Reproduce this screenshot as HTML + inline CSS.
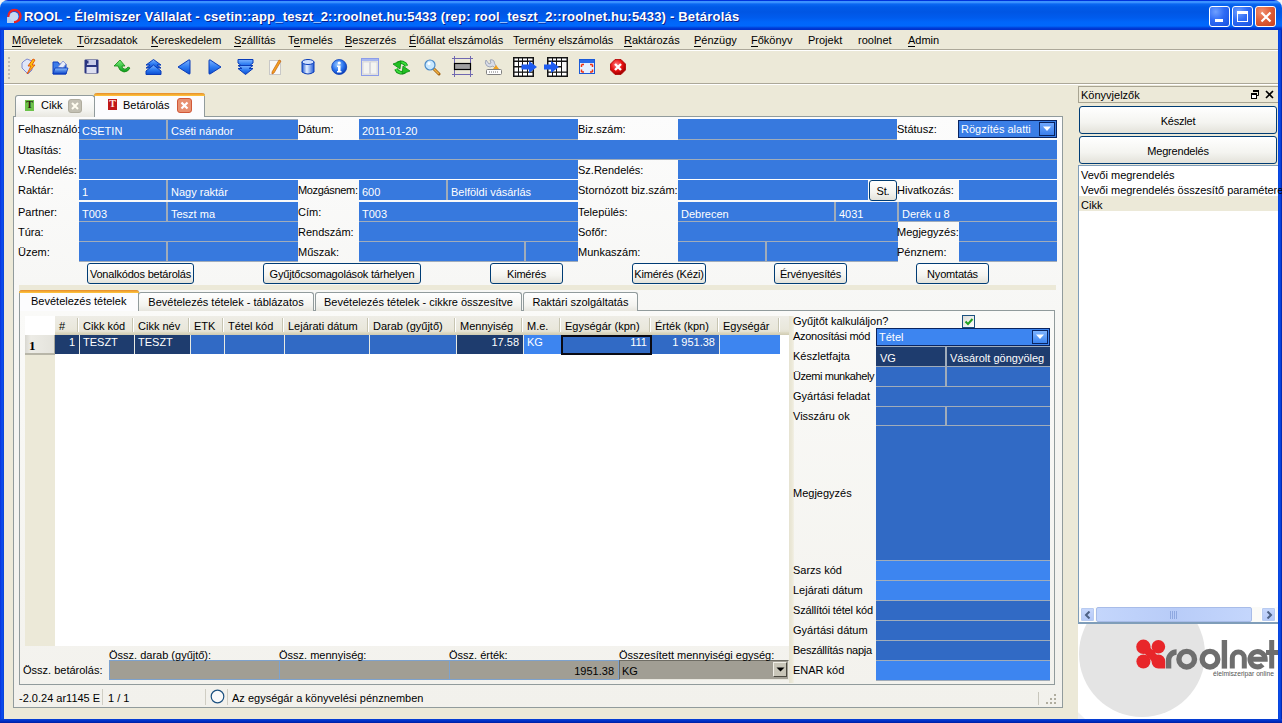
<!DOCTYPE html><html><head><meta charset="utf-8"><style>
html,body{margin:0;padding:0}
body{width:1282px;height:723px;overflow:hidden;position:relative;background:#F4F4F4;font-family:"Liberation Sans",sans-serif;font-size:11px;color:#000}
.a{position:absolute;box-sizing:border-box}
.t{white-space:nowrap;line-height:13px;letter-spacing:0}
.w{color:#fff}
.btn{padding-top:1px;border:1px solid #003C74;border-radius:3px;background:linear-gradient(#FFFFFF,#F4F4F0 60%,#E3E2DA);text-align:center;line-height:19px;letter-spacing:-0.2px;white-space:nowrap}
u{text-decoration:none;border-bottom:1px solid #000;}
</style></head><body>
<div class="a " style="left:0px;top:0px;width:1282px;height:30px;background:linear-gradient(#0034DC 0px,#0034DC 1px,#3D95FF 1px,#3A90FF 2.5px,#0A68F2 4px,#005AE8 7px,#0056E4 12px,#005CEE 18px,#0066FA 22px,#0068FC 26px,#0048E0 27.5px,#0032CC 29px,#0032CC 30px);border-radius:8px 8px 0 0"></div>
<div class="a " style="left:0px;top:30px;width:4px;height:693px;background:linear-gradient(90deg,#0831D9,#0A4EF0 50%,#0842D6)"></div>
<div class="a " style="left:1278px;top:30px;width:4px;height:693px;background:linear-gradient(90deg,#0842D6,#0A4EF0 50%,#001EA0)"></div>
<div class="a " style="left:0px;top:719px;width:1282px;height:4px;background:linear-gradient(#0842D6,#0030C8 50%,#001EA0)"></div>
<div class="a " style="left:4px;top:30px;width:1274px;height:689px;background:#ECE9D8"></div>
<svg class="a" style="left:6px;top:8px" width="16" height="16" viewBox="0 0 16 16">
<circle cx="8.5" cy="8" r="6" fill="none" stroke="#F02020" stroke-width="2.4"/>
<rect x="1" y="9" width="7" height="6" fill="#B8D0F0"/>
<circle cx="8" cy="8.5" r="4.5" fill="#C8D8F0"/>
</svg>
<div class="a" style="left:24px;top:9px;font-weight:bold;font-size:13px;line-height:16px;color:#fff;letter-spacing:0.2px;white-space:nowrap;text-shadow:1px 1px 0 #0A1E8C">ROOL - Élelmiszer Vállalat - csetin::app_teszt_2::roolnet.hu:5433 (rep: rool_teszt_2::roolnet.hu:5433) - Betárolás</div>
<div class="a " style="left:1209px;top:6px;width:21px;height:21px;border:1px solid #fff;border-radius:3px;background:radial-gradient(circle at 30% 25%,#6FA0FF 0%,#2F6BF5 45%,#1650E0 100%)"><div class="a" style="left:5px;top:12px;width:8px;height:3px;background:#fff"></div></div>
<div class="a " style="left:1232px;top:6px;width:21px;height:21px;border:1px solid #fff;border-radius:3px;background:radial-gradient(circle at 30% 25%,#6FA0FF 0%,#2F6BF5 45%,#1650E0 100%)"><div class="a" style="left:4px;top:4px;width:11px;height:11px;border:1px solid #fff;border-top-width:3px"></div></div>
<div class="a " style="left:1255px;top:6px;width:21px;height:21px;border:1px solid #fff;border-radius:3px;background:radial-gradient(circle at 30% 25%,#F09070 0%,#E0603A 45%,#C8401C 100%)"><svg class="a" style="left:0;top:0" width="21" height="21"><path d="M5.5 5.5 L14.5 14.5 M14.5 5.5 L5.5 14.5" stroke="#fff" stroke-width="2.2"/></svg></div>
<div class="a " style="left:4px;top:49px;width:1274px;height:1px;background:#ACA899"></div>
<div class="a " style="left:4px;top:50px;width:1274px;height:1px;background:#fff"></div>
<div class="a t " style="left:12px;top:34px;"><u>M</u>űveletek</div>
<div class="a t " style="left:77px;top:34px;"><u>T</u>örzsadatok</div>
<div class="a t " style="left:151px;top:34px;"><u>K</u>ereskedelem</div>
<div class="a t " style="left:234px;top:34px;"><u>S</u>zállítás</div>
<div class="a t " style="left:288px;top:34px;">T<u>e</u>rmelés</div>
<div class="a t " style="left:345px;top:34px;"><u>B</u>eszerzés</div>
<div class="a t " style="left:409px;top:34px;"><u>É</u>lőállat elszámolás</div>
<div class="a t " style="left:513px;top:34px;">Termény elszámolás</div>
<div class="a t " style="left:624px;top:34px;"><u>R</u>aktározás</div>
<div class="a t " style="left:694px;top:34px;"><u>P</u>énzügy</div>
<div class="a t " style="left:751px;top:34px;"><u>F</u>őkönyv</div>
<div class="a t " style="left:808px;top:34px;">Projekt</div>
<div class="a t " style="left:858px;top:34px;">roolnet</div>
<div class="a t " style="left:908px;top:34px;"><u>A</u>dmin</div>
<div class="a " style="left:4px;top:83px;width:1274px;height:1px;background:#ACA899"></div>
<div class="a " style="left:4px;top:84px;width:1274px;height:1px;background:#fff"></div>
<div class="a " style="left:8px;top:57px;width:2px;height:2px;background:#C1BEB3"></div>
<div class="a " style="left:8px;top:61px;width:2px;height:2px;background:#C1BEB3"></div>
<div class="a " style="left:8px;top:65px;width:2px;height:2px;background:#C1BEB3"></div>
<div class="a " style="left:8px;top:69px;width:2px;height:2px;background:#C1BEB3"></div>
<div class="a " style="left:8px;top:73px;width:2px;height:2px;background:#C1BEB3"></div>
<div class="a " style="left:8px;top:77px;width:2px;height:2px;background:#C1BEB3"></div>
<svg width="0" height="0" style="position:absolute"><defs>
<linearGradient id="gblue" x1="0" y1="0" x2="0" y2="1"><stop offset="0" stop-color="#7DB4FF"/><stop offset="0.5" stop-color="#2F7DF2"/><stop offset="1" stop-color="#0A4CD0"/></linearGradient>
<linearGradient id="ggreen" x1="0" y1="0" x2="0" y2="1"><stop offset="0" stop-color="#7CF07C"/><stop offset="1" stop-color="#0A9A1A"/></linearGradient>
<radialGradient id="rblue" cx="0.4" cy="0.35" r="0.65"><stop offset="0" stop-color="#9CCBFF"/><stop offset="0.6" stop-color="#2A74EE"/><stop offset="1" stop-color="#0B3FB8"/></radialGradient>
<radialGradient id="rred" cx="0.4" cy="0.35" r="0.65"><stop offset="0" stop-color="#FF8080"/><stop offset="0.6" stop-color="#E81010"/><stop offset="1" stop-color="#A00000"/></radialGradient>
<linearGradient id="gfold" x1="0" y1="0" x2="0" y2="1"><stop offset="0" stop-color="#8CC0FF"/><stop offset="1" stop-color="#0842C8"/></linearGradient>
<linearGradient id="gcyl" x1="0" y1="0" x2="1" y2="0"><stop offset="0" stop-color="#1A55D0"/><stop offset="0.4" stop-color="#E8F2FF"/><stop offset="1" stop-color="#1E5AD8"/></linearGradient>
</defs></svg>
<svg class="a" style="left:21px;top:58px" width="17" height="17" viewBox="0 0 17 17"><path d="M3 3 L6 1 L11 3 L11 12 L7 16 L1 10 L1 5 Z" fill="#E0E6F8" stroke="#7D88D0" stroke-width="1"/><path d="M12 1 L7 8 L10 8 L6 16 L14 7 L11 7 L14 2 Z" fill="#FFC20A" stroke="#E0500A" stroke-width="0.9"/></svg>
<svg class="a" style="left:52px;top:59px" width="17" height="16" viewBox="0 0 17 16"><path d="M1 3 L6 3 L7 5 L14 5 L14 15 L1 15 Z" fill="#3C7CE8" stroke="#1040C0" stroke-width="1"/><path d="M6 8 L11 2 L14 5 L11 9 Z" fill="#E6ECF8" stroke="#8090D0" stroke-width="0.8"/><path d="M3 9 L16 9 L14 15 L1 15 Z" fill="url(#gfold)" stroke="#0836B8" stroke-width="0.8"/></svg>
<svg class="a" style="left:84px;top:59px" width="15" height="15" viewBox="0 0 15 15"><rect x="0.5" y="0.5" width="14" height="14" fill="#2A3580" rx="1"/><rect x="3" y="1" width="9" height="5" fill="#C8CCE8"/><rect x="2.5" y="8" width="10" height="6" fill="#DCDEF0"/><rect x="3" y="1.5" width="1.5" height="3" fill="#2A3580"/></svg>
<svg class="a" style="left:114px;top:60px" width="17" height="14" viewBox="0 0 17 14"><path d="M6 0 L0 6 L4 6 Q5 11 10 12 Q14 12 16 8 L14 7 Q12 10 10 9 Q8 8 8 6 L11 6 Z" fill="url(#ggreen)" stroke="#108A10" stroke-width="0.8"/></svg>
<svg class="a" style="left:145px;top:59px" width="17" height="16" viewBox="0 0 17 16"><path d="M8.5 0.5 L16 6 L12 6 L16 9 L1 9 L5 6 L1 6 Z" fill="url(#gblue)" stroke="#0A3CB8" stroke-width="1"/><path d="M8.5 6 L16 12 L16 15.5 L1 15.5 L1 12 Z" fill="url(#gblue)" stroke="#0A3CB8" stroke-width="1"/></svg>
<svg class="a" style="left:177px;top:59px" width="14" height="16" viewBox="0 0 14 16"><path d="M1 8 L12 0.8 Q13 0.5 13 2 L13 14 Q13 15.5 12 15 Z" fill="url(#gblue)" stroke="#0A3CB8" stroke-width="1"/></svg>
<svg class="a" style="left:208px;top:59px" width="14" height="16" viewBox="0 0 14 16"><path d="M13 8 L2 0.8 Q1 0.5 1 2 L1 14 Q1 15.5 2 15 Z" fill="url(#gblue)" stroke="#0A3CB8" stroke-width="1"/></svg>
<svg class="a" style="left:237px;top:59px" width="17" height="16" viewBox="0 0 17 16"><path d="M1 0.5 L16 0.5 L16 4 L8.5 10 L1 4 Z" fill="url(#gblue)" stroke="#0A3CB8" stroke-width="1"/><path d="M1 6.5 L5 9.5 L1 9.5 L8.5 15.5 L16 9.5 L12 9.5 L16 6.5 Z" fill="url(#gblue)" stroke="#0A3CB8" stroke-width="1"/></svg>
<svg class="a" style="left:269px;top:59px" width="13" height="16" viewBox="0 0 13 16"><rect x="0.5" y="1.5" width="11" height="14" fill="#F8F8F8" stroke="#C8C8C8" stroke-width="1"/><path d="M3 13 L10 1 L12 2 L5 14 L3 15 Z" fill="#F4A020" stroke="#C06010" stroke-width="0.7"/></svg>
<svg class="a" style="left:301px;top:59px" width="14" height="16" viewBox="0 0 14 16"><path d="M1 3 L1 13 Q7 17 13 13 L13 3 Z" fill="url(#gcyl)" stroke="#0A3CB8" stroke-width="1"/><ellipse cx="7" cy="3" rx="6" ry="2.5" fill="#CFE0FF" stroke="#0A3CB8" stroke-width="1"/></svg>
<svg class="a" style="left:331px;top:59px" width="17" height="16" viewBox="0 0 17 16"><circle cx="8.2" cy="8" r="7.5" fill="url(#rblue)" stroke="#0A3CB8" stroke-width="0.8"/><circle cx="8.2" cy="4" r="1.6" fill="#fff"/><path d="M6 6.5 L9.5 6.5 L9.5 12 L10.5 12 L10.5 13.5 L6 13.5 L6 12 L7 12 L7 8 L6 8 Z" fill="#fff"/></svg>
<svg class="a" style="left:361px;top:58px" width="18" height="18" viewBox="0 0 18 18"><rect x="0.5" y="0.5" width="17" height="17" fill="#E8E8E0" stroke="#8C9CE8" stroke-width="1"/><rect x="1" y="1" width="16" height="2" fill="#A8B8F0"/><rect x="2" y="4" width="6.5" height="12" fill="#F4F4F0" stroke="#C8C8D8" stroke-width="0.6"/><rect x="9.5" y="4" width="6.5" height="12" fill="#F4F4F0" stroke="#C8C8D8" stroke-width="0.6"/></svg>
<svg class="a" style="left:393px;top:59px" width="17" height="17" viewBox="0 0 17 17"><g fill="none" stroke="#0C8C14" stroke-width="3.6"><path d="M13.5 7 A5.8 5.8 0 0 0 4.5 4.5"/><path d="M3 10 A5.8 5.8 0 0 0 12 12.5"/></g><g fill="none" stroke="#3ADC3A" stroke-width="2"><path d="M13.5 7 A5.8 5.8 0 0 0 4.5 4.5"/><path d="M3 10 A5.8 5.8 0 0 0 12 12.5"/></g><path d="M0 5 L8 2 L7 10 Z" fill="#22C022" stroke="#0C8C14" stroke-width="0.8"/><path d="M17 12 L9 15 L10 7 Z" fill="#22C022" stroke="#0C8C14" stroke-width="0.8"/></svg>
<svg class="a" style="left:424px;top:59px" width="17" height="17" viewBox="0 0 17 17"><path d="M9 9 L15 15" stroke="#A06010" stroke-width="3" stroke-linecap="round"/><path d="M9.5 9.5 L14.5 14.5" stroke="#F0B040" stroke-width="1.5" stroke-linecap="round"/><circle cx="6" cy="6" r="5" fill="#C8E8FF" stroke="#4A8AC8" stroke-width="1.2"/><circle cx="5" cy="4.5" r="1.5" fill="#fff"/></svg>
<svg class="a" style="left:452px;top:56px" width="21" height="21" viewBox="0 0 21 21"><path d="M2.5 0 L2.5 21 M18.5 0 L18.5 21 M0 2.5 L21 2.5 M0 18.5 L21 18.5" stroke="#7068B0" stroke-width="1"/><rect x="2.5" y="7.5" width="16" height="6" fill="#A0A0A0" stroke="#000" stroke-width="1.2"/></svg>
<svg class="a" style="left:484px;top:58px" width="19" height="18" viewBox="0 0 19 18"><path d="M2 2 Q0 5 3 8 Q6 10 9 8 L11 10 L12 8 Q10 5 10 3 Q8 1 6 2 L7 5 L5 6 Z" fill="#D8DCE8" stroke="#8890A8" stroke-width="0.7"/><path d="M9 11 L12 7 L15 11 Z" fill="#F0A020"/><rect x="2.5" y="11.5" width="15" height="5" fill="#fff" stroke="#808080" stroke-width="1" rx="1"/><path d="M5 14 L15 14" stroke="#707070" stroke-width="1" stroke-dasharray="1 1"/></svg>
<svg class="a" style="left:513px;top:57px" width="25" height="20" viewBox="0 0 25 20"><rect x="0" y="0" width="21" height="20" fill="#141414"/><rect x="1.5" y="1.5" width="3.5" height="2" fill="#fff"/><rect x="1.5" y="5" width="3.5" height="4" fill="#fff"/><rect x="1.5" y="10.5" width="3.5" height="4" fill="#fff"/><rect x="1.5" y="15.8" width="3.5" height="2.7" fill="#fff"/><rect x="6" y="1.5" width="3" height="2" fill="#fff"/><rect x="6" y="5" width="3" height="4" fill="#fff"/><rect x="6" y="10.5" width="3" height="4" fill="#fff"/><rect x="6" y="15.8" width="3" height="2.7" fill="#fff"/><rect x="10" y="1.5" width="4" height="2" fill="#fff"/><rect x="10" y="5" width="4" height="4" fill="#fff"/><rect x="10" y="10.5" width="4" height="4" fill="#fff"/><rect x="10" y="15.8" width="4" height="2.7" fill="#fff"/><rect x="15" y="1.5" width="4.5" height="2" fill="#fff"/><rect x="15" y="5" width="4.5" height="4" fill="#fff"/><rect x="15" y="10.5" width="4.5" height="4" fill="#fff"/><rect x="15" y="15.8" width="4.5" height="2.7" fill="#fff"/><path d="M8.5 7.5 L16 7.5 L16 4 L24 10 L16 16 L16 12.5 L8.5 12.5 Z" fill="#1E5CF0"/></svg>
<svg class="a" style="left:544px;top:57px" width="24" height="20" viewBox="0 0 24 20"><rect x="3" y="0" width="21" height="20" fill="#141414"/><rect x="4.5" y="1.5" width="3.5" height="2" fill="#fff"/><rect x="4.5" y="5" width="3.5" height="4" fill="#fff"/><rect x="4.5" y="10.5" width="3.5" height="4" fill="#fff"/><rect x="4.5" y="15.8" width="3.5" height="2.7" fill="#fff"/><rect x="9" y="1.5" width="3" height="2" fill="#fff"/><rect x="9" y="5" width="3" height="4" fill="#fff"/><rect x="9" y="10.5" width="3" height="4" fill="#fff"/><rect x="9" y="15.8" width="3" height="2.7" fill="#fff"/><rect x="13" y="1.5" width="4" height="2" fill="#fff"/><rect x="13" y="5" width="4" height="4" fill="#fff"/><rect x="13" y="10.5" width="4" height="4" fill="#fff"/><rect x="13" y="15.8" width="4" height="2.7" fill="#fff"/><rect x="18" y="1.5" width="4.5" height="2" fill="#fff"/><rect x="18" y="5" width="4.5" height="9.5" fill="#F6F6F6"/><rect x="18" y="15.8" width="4.5" height="2.7" fill="#fff"/><path d="M0 7.5 L7 7.5 L7 4 L15 10 L7 16 L7 12.5 L0 12.5 Z" fill="#1E5CF0"/></svg>
<svg class="a" style="left:579px;top:59px" width="16" height="15" viewBox="0 0 16 15"><rect x="0.5" y="0.5" width="15" height="14" fill="#E8F0FF" stroke="#1A5AD8" stroke-width="1"/><rect x="1" y="1" width="14" height="3" fill="#2A6AE8"/><path d="M2.5 5.5 L5 5.5 M2.5 5.5 L2.5 8 M13.5 5.5 L11 5.5 M13.5 5.5 L13.5 8 M2.5 13 L5 13 M2.5 13 L2.5 10.5 M13.5 13 L11 13 M13.5 13 L13.5 10.5" stroke="#F03010" stroke-width="1.5"/></svg>
<svg class="a" style="left:610px;top:59px" width="16" height="16" viewBox="0 0 16 16"><path d="M5 0.5 L11 0.5 L15.5 5 L15.5 11 L11 15.5 L5 15.5 L0.5 11 L0.5 5 Z" fill="url(#rred)" stroke="#B00000" stroke-width="0.8"/><path d="M5 5 L11 11 M11 5 L5 11" stroke="#fff" stroke-width="2.4"/></svg>
<div class="a " style="left:13px;top:116px;width:1050px;height:592px;background:linear-gradient(#FCFCFE 0%,#F6F6F3 40%,#F2F1EC 100%);border:1px solid #919B9C"></div>
<div class="a " style="left:15px;top:95px;width:80px;height:22px;background:linear-gradient(#FFFFFF,#F3F3EF 70%,#E8E7E0);border:1px solid #919B9C;border-bottom:none;border-radius:3px 3px 0 0"></div>
<div class="a " style="left:25px;top:100px;width:9px;height:11px;background:#6CC24A"><div class="a" style="left:0;top:-1px;width:9px;text-align:center;font:bold 10px 'Liberation Serif';line-height:12px;color:#2A1A10">T</div></div>
<div class="a t " style="left:41px;top:99px;">Cikk</div>
<div class="a " style="left:68px;top:99px;width:14px;height:14px;background:#C3C0B3;border:1px solid #B0AD9F;border-radius:3px"><svg class="a" style="left:0;top:0" width="12" height="12"><path d="M3 3 L9 9 M9 3 L3 9" stroke="#FFFDF0" stroke-width="2"/></svg></div>
<div class="a " style="left:94px;top:93px;width:111px;height:25px;background:#FCFCFE;border:1px solid #919B9C;border-top:none;border-bottom:none;border-radius:3px 3px 0 0"></div>
<div class="a " style="left:94px;top:93px;width:111px;height:3px;background:linear-gradient(#E68B2C,#FFC73C);border-radius:3px 3px 0 0"></div>
<div class="a " style="left:108px;top:99px;width:9px;height:11px;background:#C01818"><div class="a" style="left:0;top:-1px;width:9px;text-align:center;font:bold 10px 'Liberation Serif';line-height:12px;color:#FFE8E0">T</div></div>
<div class="a t " style="left:123px;top:99px;">Betárolás</div>
<div class="a " style="left:177px;top:98px;width:15px;height:15px;background:#E89070;border:1px solid #D05838;border-radius:3px"><svg class="a" style="left:0;top:0" width="13" height="13"><path d="M3.5 3.5 L9.5 9.5 M9.5 3.5 L3.5 9.5" stroke="#fff" stroke-width="2.2"/></svg></div>
<div class="a " style="left:14px;top:117px;width:1048px;height:168px;background:linear-gradient(#FCFCFC,#F7F7F5)"></div>
<div class="a " style="left:79px;top:119px;width:219px;height:20px;background:#3779DE;"><div class="a t" style="left:3px;top:6px;color:#fff">CSETIN</div></div>
<div class="a " style="left:79px;top:139px;width:219px;height:1px;background:#A0ACBA"></div>
<div class="a " style="left:359px;top:119px;width:219px;height:20px;background:#3779DE;"><div class="a t" style="left:3px;top:6px;color:#fff">2011-01-20</div></div>
<div class="a " style="left:359px;top:139px;width:219px;height:1px;background:#A0ACBA"></div>
<div class="a " style="left:678px;top:119px;width:219px;height:20px;background:#3779DE;"></div>
<div class="a " style="left:678px;top:139px;width:219px;height:1px;background:#A0ACBA"></div>
<div class="a t " style="left:18px;top:123px;">Felhasználó:</div>
<div class="a t " style="left:298px;top:123px;">Dátum:</div>
<div class="a t " style="left:578px;top:123px;">Biz.szám:</div>
<div class="a t " style="left:897px;top:123px;">Státusz:</div>
<div class="a " style="left:79px;top:119px;width:219px;height:1px;background:#A0ACBA"></div>
<div class="a " style="left:166px;top:119px;width:2px;height:21px;background:#A0ACBA"></div>
<div class="a t" style="left:171px;top:125px;color:#fff">Cséti nándor</div>
<div class="a " style="left:958px;top:120px;width:99px;height:18px;background:#3A7EE6;border:1px solid #0A2460"><div class="a t" style="left:2px;top:2px;color:#fff">Rögzítés alatti</div></div>
<div class="a " style="left:1039px;top:122px;width:16px;height:14px;background:linear-gradient(#6FA8FF,#3A7EEA);border:1px solid #0A2460"><svg class="a" style="left:2px;top:3px" width="10" height="6"><path d="M1 0.5 L9 0.5 L5 5 Z" fill="#fff"/></svg></div>
<div class="a " style="left:79px;top:140px;width:978px;height:19px;background:#3779DE;"></div>
<div class="a " style="left:79px;top:159px;width:978px;height:1px;background:#A0ACBA"></div>
<div class="a t " style="left:18px;top:144px;">Utasítás:</div>
<div class="a " style="left:79px;top:160px;width:499px;height:19px;background:#3779DE;"></div>
<div class="a " style="left:79px;top:179px;width:499px;height:1px;background:#FFFFFF"></div>
<div class="a " style="left:678px;top:160px;width:379px;height:19px;background:#3779DE;"></div>
<div class="a " style="left:678px;top:179px;width:379px;height:1px;background:#FFFFFF"></div>
<div class="a t " style="left:18px;top:164px;">V.Rendelés:</div>
<div class="a t " style="left:578px;top:164px;">Sz.Rendelés:</div>
<div class="a " style="left:79px;top:180px;width:219px;height:20px;background:#3779DE;"><div class="a t" style="left:3px;top:6px;color:#fff">1</div></div>
<div class="a " style="left:359px;top:180px;width:219px;height:20px;background:#3779DE;"><div class="a t" style="left:3px;top:6px;color:#fff">600</div></div>
<div class="a " style="left:678px;top:180px;width:190px;height:20px;background:#3779DE;"></div>
<div class="a " style="left:959px;top:180px;width:98px;height:20px;background:#3779DE;"></div>
<div class="a t " style="left:18px;top:184px;">Raktár:</div>
<div class="a t " style="left:298px;top:184px;"><span style="letter-spacing:-0.33px">Mozgásnem:</span></div>
<div class="a t " style="left:578px;top:184px;">Stornózott biz.szám:</div>
<div class="a t " style="left:897px;top:184px;">Hivatkozás:</div>
<div class="a " style="left:166px;top:180px;width:2px;height:20px;background:#A0ACBA"></div>
<div class="a " style="left:446px;top:180px;width:2px;height:20px;background:#A0ACBA"></div>
<div class="a t" style="left:171px;top:186px;color:#fff">Nagy raktár</div>
<div class="a t" style="left:451px;top:186px;color:#fff">Belföldi vásárlás</div>
<div class="a btn" style="left:869px;top:180px;width:28px;height:21px;">St.</div>
<div class="a " style="left:79px;top:202px;width:219px;height:19px;background:#3779DE;"><div class="a t" style="left:3px;top:6px;color:#fff">T003</div></div>
<div class="a " style="left:79px;top:221px;width:219px;height:1px;background:#A0ACBA"></div>
<div class="a " style="left:359px;top:202px;width:219px;height:19px;background:#3779DE;"><div class="a t" style="left:3px;top:6px;color:#fff">T003</div></div>
<div class="a " style="left:359px;top:221px;width:219px;height:1px;background:#A0ACBA"></div>
<div class="a " style="left:678px;top:202px;width:379px;height:19px;background:#3779DE;"><div class="a t" style="left:3px;top:6px;color:#fff">Debrecen</div></div>
<div class="a " style="left:678px;top:221px;width:379px;height:1px;background:#A0ACBA"></div>
<div class="a t " style="left:18px;top:206px;">Partner:</div>
<div class="a t " style="left:298px;top:206px;">Cím:</div>
<div class="a t " style="left:578px;top:206px;">Település:</div>
<div class="a " style="left:166px;top:202px;width:2px;height:20px;background:#A0ACBA"></div>
<div class="a " style="left:834px;top:202px;width:2px;height:20px;background:#A0ACBA"></div>
<div class="a " style="left:897px;top:202px;width:2px;height:20px;background:#A0ACBA"></div>
<div class="a t" style="left:171px;top:208px;color:#fff">Teszt ma</div>
<div class="a t" style="left:839px;top:208px;color:#fff">4031</div>
<div class="a t" style="left:902px;top:208px;color:#fff">Derék u 8</div>
<div class="a " style="left:79px;top:222px;width:219px;height:19px;background:#3779DE;"></div>
<div class="a " style="left:79px;top:241px;width:219px;height:1px;background:#A0ACBA"></div>
<div class="a " style="left:359px;top:222px;width:219px;height:19px;background:#3779DE;"></div>
<div class="a " style="left:359px;top:241px;width:219px;height:1px;background:#A0ACBA"></div>
<div class="a " style="left:678px;top:222px;width:220px;height:19px;background:#3779DE;"></div>
<div class="a " style="left:678px;top:241px;width:220px;height:1px;background:#A0ACBA"></div>
<div class="a " style="left:959px;top:222px;width:98px;height:19px;background:#3779DE;"></div>
<div class="a " style="left:959px;top:241px;width:98px;height:1px;background:#A0ACBA"></div>
<div class="a t " style="left:18px;top:226px;">Túra:</div>
<div class="a t " style="left:298px;top:226px;">Rendszám:</div>
<div class="a t " style="left:578px;top:226px;">Sofőr:</div>
<div class="a t " style="left:897px;top:226px;">Megjegyzés:</div>
<div class="a " style="left:79px;top:242px;width:219px;height:19px;background:#3779DE;"></div>
<div class="a " style="left:79px;top:261px;width:219px;height:1px;background:#A0ACBA"></div>
<div class="a " style="left:359px;top:242px;width:219px;height:19px;background:#3779DE;"></div>
<div class="a " style="left:359px;top:261px;width:219px;height:1px;background:#A0ACBA"></div>
<div class="a " style="left:678px;top:242px;width:220px;height:19px;background:#3779DE;"></div>
<div class="a " style="left:678px;top:261px;width:220px;height:1px;background:#A0ACBA"></div>
<div class="a " style="left:959px;top:242px;width:98px;height:19px;background:#3779DE;"></div>
<div class="a " style="left:959px;top:261px;width:98px;height:1px;background:#A0ACBA"></div>
<div class="a t " style="left:18px;top:246px;">Üzem:</div>
<div class="a t " style="left:298px;top:246px;">Műszak:</div>
<div class="a t " style="left:578px;top:246px;">Munkaszám:</div>
<div class="a t " style="left:897px;top:246px;">Pénznem:</div>
<div class="a " style="left:166px;top:242px;width:2px;height:20px;background:#A0ACBA"></div>
<div class="a " style="left:524px;top:242px;width:2px;height:20px;background:#A0ACBA"></div>
<div class="a " style="left:765px;top:242px;width:2px;height:20px;background:#A0ACBA"></div>
<div class="a btn" style="left:87px;top:263px;width:107px;height:21px;">Vonalkódos betárolás</div>
<div class="a btn" style="left:263px;top:263px;width:158px;height:21px;">Gyűjtőcsomagolások tárhelyen</div>
<div class="a btn" style="left:490px;top:263px;width:73px;height:21px;">Kimérés</div>
<div class="a btn" style="left:632px;top:263px;width:74px;height:21px;">Kimérés (Kézi)</div>
<div class="a btn" style="left:774px;top:263px;width:73px;height:21px;">Érvényesítés</div>
<div class="a btn" style="left:916px;top:263px;width:73px;height:21px;">Nyomtatás</div>
<div class="a " style="left:19px;top:285px;width:1037px;height:5px;background:#ECE9D8"></div>
<div class="a " style="left:19px;top:310px;width:1036px;height:375px;background:linear-gradient(#FAFAF8,#F3F2ED);border:1px solid #919B9C"></div>
<div class="a " style="left:138px;top:292px;width:176px;height:19px;background:linear-gradient(#FFFFFF,#F3F3EF 70%,#E6E5DE);border:1px solid #919B9C;border-bottom:none;border-radius:3px 3px 0 0"><div class="a t" style="left:0;width:100%;text-align:center;top:3px">Bevételezés tételek - táblázatos</div></div>
<div class="a " style="left:315px;top:292px;width:207px;height:19px;background:linear-gradient(#FFFFFF,#F3F3EF 70%,#E6E5DE);border:1px solid #919B9C;border-bottom:none;border-radius:3px 3px 0 0"><div class="a t" style="left:0;width:100%;text-align:center;top:3px">Bevételezés tételek - cikkre összesítve</div></div>
<div class="a " style="left:523px;top:292px;width:115px;height:19px;background:linear-gradient(#FFFFFF,#F3F3EF 70%,#E6E5DE);border:1px solid #919B9C;border-bottom:none;border-radius:3px 3px 0 0"><div class="a t" style="left:0;width:100%;text-align:center;top:3px">Raktári szolgáltatás</div></div>
<div class="a " style="left:19px;top:290px;width:120px;height:21px;background:#FCFCFE;border:1px solid #919B9C;border-bottom:none;border-radius:3px 3px 0 0"><div class="a t" style="left:11px;top:4px">Bevételezés tételek</div></div>
<div class="a " style="left:19px;top:290px;width:120px;height:3px;background:linear-gradient(#E68B2C,#FFC73C);border-radius:3px 3px 0 0"></div>
<div class="a " style="left:25px;top:316px;width:764px;height:330px;background:#FFFFFF"></div>
<div class="a " style="left:25px;top:335px;width:30px;height:311px;background:#ECE9D8"></div>
<div class="a " style="left:25px;top:335px;width:30px;height:20px;background:linear-gradient(90deg,#D8D7D0,#EDECE6 20%,#E4E3DC);border-right:1px solid #A8A79C;border-bottom:2px solid #B8B6A8"><div class="a" style="left:4px;top:3px;font:bold 13px 'Liberation Serif';line-height:15px">1</div></div>
<div class="a " style="left:55px;top:316px;width:734px;height:19px;background:linear-gradient(#EEEDE6,#E9E7DB 70%,#DCD8C4)"></div>
<div class="a " style="left:55px;top:332px;width:734px;height:3px;background:linear-gradient(#E0DCC8,#D0CBB2)"></div>
<div class="a t " style="left:59px;top:320px;">#</div>
<div class="a " style="left:77px;top:318px;width:1px;height:14px;background:#C7C5B2"></div>
<div class="a " style="left:78px;top:318px;width:1px;height:14px;background:#FFFFFF"></div>
<div class="a " style="left:55px;top:335px;width:24px;height:19px;background:#1E3C6E"></div>
<div class="a t" style="left:55px;width:20px;text-align:right;top:336px;color:#fff">1</div>
<div class="a t " style="left:83px;top:320px;">Cikk kód</div>
<div class="a " style="left:132px;top:318px;width:1px;height:14px;background:#C7C5B2"></div>
<div class="a " style="left:133px;top:318px;width:1px;height:14px;background:#FFFFFF"></div>
<div class="a " style="left:80px;top:335px;width:54px;height:19px;background:#1E3C6E"></div>
<div class="a t" style="left:83px;top:336px;color:#fff">TESZT</div>
<div class="a t " style="left:138px;top:320px;">Cikk név</div>
<div class="a " style="left:188px;top:318px;width:1px;height:14px;background:#C7C5B2"></div>
<div class="a " style="left:189px;top:318px;width:1px;height:14px;background:#FFFFFF"></div>
<div class="a " style="left:135px;top:335px;width:55px;height:19px;background:#1E3C6E"></div>
<div class="a t" style="left:138px;top:336px;color:#fff">TESZT</div>
<div class="a t " style="left:194px;top:320px;">ETK</div>
<div class="a " style="left:222px;top:318px;width:1px;height:14px;background:#C7C5B2"></div>
<div class="a " style="left:223px;top:318px;width:1px;height:14px;background:#FFFFFF"></div>
<div class="a " style="left:191px;top:335px;width:33px;height:19px;background:#316AC5"></div>
<div class="a t " style="left:228px;top:320px;">Tétel kód</div>
<div class="a " style="left:282px;top:318px;width:1px;height:14px;background:#C7C5B2"></div>
<div class="a " style="left:283px;top:318px;width:1px;height:14px;background:#FFFFFF"></div>
<div class="a " style="left:225px;top:335px;width:59px;height:19px;background:#316AC5"></div>
<div class="a t " style="left:288px;top:320px;">Lejárati dátum</div>
<div class="a " style="left:367px;top:318px;width:1px;height:14px;background:#C7C5B2"></div>
<div class="a " style="left:368px;top:318px;width:1px;height:14px;background:#FFFFFF"></div>
<div class="a " style="left:285px;top:335px;width:84px;height:19px;background:#316AC5"></div>
<div class="a t " style="left:373px;top:320px;">Darab (gyűjtő)</div>
<div class="a " style="left:454px;top:318px;width:1px;height:14px;background:#C7C5B2"></div>
<div class="a " style="left:455px;top:318px;width:1px;height:14px;background:#FFFFFF"></div>
<div class="a " style="left:370px;top:335px;width:86px;height:19px;background:#316AC5"></div>
<div class="a t " style="left:460px;top:320px;">Mennyiség</div>
<div class="a " style="left:521px;top:318px;width:1px;height:14px;background:#C7C5B2"></div>
<div class="a " style="left:522px;top:318px;width:1px;height:14px;background:#FFFFFF"></div>
<div class="a " style="left:457px;top:335px;width:66px;height:19px;background:#1E3C6E"></div>
<div class="a t" style="left:456px;width:63px;text-align:right;top:336px;color:#fff">17.58</div>
<div class="a t " style="left:527px;top:320px;">M.e.</div>
<div class="a " style="left:559px;top:318px;width:1px;height:14px;background:#C7C5B2"></div>
<div class="a " style="left:560px;top:318px;width:1px;height:14px;background:#FFFFFF"></div>
<div class="a " style="left:524px;top:335px;width:37px;height:19px;background:#3D85F0"></div>
<div class="a t" style="left:527px;top:336px;color:#fff">KG</div>
<div class="a t " style="left:565px;top:320px;">Egységár (kpn)</div>
<div class="a " style="left:649px;top:318px;width:1px;height:14px;background:#C7C5B2"></div>
<div class="a " style="left:650px;top:318px;width:1px;height:14px;background:#FFFFFF"></div>
<div class="a " style="left:562px;top:335px;width:89px;height:19px;background:#316AC5"></div>
<div class="a t" style="left:561px;width:86px;text-align:right;top:336px;color:#fff">111</div>
<div class="a t " style="left:655px;top:320px;">Érték (kpn)</div>
<div class="a " style="left:717px;top:318px;width:1px;height:14px;background:#C7C5B2"></div>
<div class="a " style="left:718px;top:318px;width:1px;height:14px;background:#FFFFFF"></div>
<div class="a " style="left:652px;top:335px;width:67px;height:19px;background:#316AC5"></div>
<div class="a t" style="left:651px;width:64px;text-align:right;top:336px;color:#fff">1 951.38</div>
<div class="a t " style="left:723px;top:320px;">Egységár</div>
<div class="a " style="left:778px;top:318px;width:1px;height:14px;background:#C7C5B2"></div>
<div class="a " style="left:779px;top:318px;width:1px;height:14px;background:#FFFFFF"></div>
<div class="a " style="left:720px;top:335px;width:60px;height:19px;background:#3D85F0"></div>
<div class="a " style="left:79px;top:335px;width:1px;height:19px;background:#E8EAE2"></div>
<div class="a " style="left:134px;top:335px;width:1px;height:19px;background:#E8EAE2"></div>
<div class="a " style="left:190px;top:335px;width:1px;height:19px;background:#E8EAE2"></div>
<div class="a " style="left:224px;top:335px;width:1px;height:19px;background:#E8EAE2"></div>
<div class="a " style="left:284px;top:335px;width:1px;height:19px;background:#E8EAE2"></div>
<div class="a " style="left:369px;top:335px;width:1px;height:19px;background:#E8EAE2"></div>
<div class="a " style="left:456px;top:335px;width:1px;height:19px;background:#E8EAE2"></div>
<div class="a " style="left:523px;top:335px;width:1px;height:19px;background:#E8EAE2"></div>
<div class="a " style="left:561px;top:335px;width:1px;height:19px;background:#E8EAE2"></div>
<div class="a " style="left:651px;top:335px;width:1px;height:19px;background:#E8EAE2"></div>
<div class="a " style="left:719px;top:335px;width:1px;height:19px;background:#E8EAE2"></div>
<div class="a " style="left:561px;top:335px;width:91px;height:20px;border:2px solid #0A0A14"></div>
<div class="a " style="left:789px;top:316px;width:5px;height:367px;background:linear-gradient(90deg,#E6E3D2,#ECE9D8 60%,#F2F0E6)"></div>
<div class="a t " style="left:793px;top:315px;">Gyűjtőt kalkuláljon?</div>
<div class="a " style="left:962px;top:315px;width:13px;height:13px;background:linear-gradient(135deg,#DCDCD7,#FFFFFF);border:1px solid #1C5180"><svg class="a" style="left:1px;top:1px" width="10" height="10"><path d="M1.5 4.5 L4 7 L8.5 2" fill="none" stroke="#21A121" stroke-width="2"/></svg></div>
<div class="a t " style="left:793px;top:330px;letter-spacing:-0.29px">Azonosítási mód</div>
<div class="a " style="left:876px;top:328px;width:174px;height:18px;background:#3D85F0;border:1px solid #0A2460"><div class="a t" style="left:2px;top:2px;color:#fff">Tétel</div></div>
<div class="a " style="left:1032px;top:330px;width:16px;height:14px;background:linear-gradient(#7DB4FF,#3D85F0);border:1px solid #0A2460"><svg class="a" style="left:2px;top:3px" width="10" height="6"><path d="M1 0.5 L9 0.5 L5 5 Z" fill="#fff"/></svg></div>
<div class="a " style="left:876px;top:346px;width:174px;height:1px;background:#A0ACBA"></div>
<div class="a t " style="left:793px;top:350px;letter-spacing:0px">Készletfajta</div>
<div class="a " style="left:876px;top:347px;width:174px;height:19px;background:#1E3C6E"></div>
<div class="a " style="left:876px;top:366px;width:174px;height:1px;background:#A0ACBA"></div>
<div class="a " style="left:945px;top:347px;width:2px;height:20px;background:#A0ACBA"></div>
<div class="a t" style="left:880px;top:352px;color:#fff">VG</div>
<div class="a t" style="left:950px;top:352px;color:#fff">Vásárolt göngyöleg</div>
<div class="a t " style="left:793px;top:370px;letter-spacing:-0.43px">Üzemi munkahely</div>
<div class="a " style="left:876px;top:367px;width:174px;height:19px;background:#316AC5"></div>
<div class="a " style="left:876px;top:386px;width:174px;height:1px;background:#A0ACBA"></div>
<div class="a " style="left:945px;top:367px;width:2px;height:20px;background:#A0ACBA"></div>
<div class="a t " style="left:793px;top:390px;letter-spacing:0px">Gyártási feladat</div>
<div class="a " style="left:876px;top:387px;width:174px;height:19px;background:#316AC5"></div>
<div class="a " style="left:876px;top:406px;width:174px;height:1px;background:#A0ACBA"></div>
<div class="a t " style="left:793px;top:410px;letter-spacing:0px">Visszáru ok</div>
<div class="a " style="left:876px;top:407px;width:174px;height:18px;background:#316AC5"></div>
<div class="a " style="left:876px;top:425px;width:174px;height:1px;background:#A0ACBA"></div>
<div class="a " style="left:945px;top:407px;width:2px;height:19px;background:#A0ACBA"></div>
<div class="a " style="left:876px;top:426px;width:174px;height:134px;background:#316AC5"></div>
<div class="a " style="left:876px;top:560px;width:174px;height:1px;background:#A0ACBA"></div>
<div class="a t " style="left:793px;top:487px;">Megjegyzés</div>
<div class="a t " style="left:793px;top:564px;letter-spacing:0px">Sarzs kód</div>
<div class="a " style="left:876px;top:561px;width:174px;height:19px;background:#3D85F0"></div>
<div class="a " style="left:876px;top:580px;width:174px;height:1px;background:#A0ACBA"></div>
<div class="a t " style="left:793px;top:584px;letter-spacing:0px">Lejárati dátum</div>
<div class="a " style="left:876px;top:581px;width:174px;height:19px;background:#3D85F0"></div>
<div class="a " style="left:876px;top:600px;width:174px;height:1px;background:#A0ACBA"></div>
<div class="a t " style="left:793px;top:604px;letter-spacing:-0.17px">Szállítói tétel kód</div>
<div class="a " style="left:876px;top:601px;width:174px;height:19px;background:#316AC5"></div>
<div class="a " style="left:876px;top:620px;width:174px;height:1px;background:#A0ACBA"></div>
<div class="a t " style="left:793px;top:624px;letter-spacing:0px">Gyártási dátum</div>
<div class="a " style="left:876px;top:621px;width:174px;height:19px;background:#316AC5"></div>
<div class="a " style="left:876px;top:640px;width:174px;height:1px;background:#A0ACBA"></div>
<div class="a t " style="left:793px;top:644px;letter-spacing:-0.25px">Beszállítás napja</div>
<div class="a " style="left:876px;top:641px;width:174px;height:19px;background:#316AC5"></div>
<div class="a " style="left:876px;top:660px;width:174px;height:1px;background:#A0ACBA"></div>
<div class="a t " style="left:793px;top:664px;letter-spacing:0px">ENAR kód</div>
<div class="a " style="left:876px;top:661px;width:174px;height:19px;background:#3D85F0"></div>
<div class="a " style="left:876px;top:680px;width:174px;height:1px;background:#A0ACBA"></div>
<div class="a t " style="left:109px;top:649px;z-index:2">Össz. darab (gyűjtő):</div>
<div class="a t " style="left:279px;top:649px;z-index:2">Össz. mennyiség:</div>
<div class="a t " style="left:449px;top:649px;z-index:2">Össz. érték:</div>
<div class="a t " style="left:619px;top:649px;z-index:2">Összesített mennyiségi egység:</div>
<div class="a t " style="left:23px;top:664px;">Össz. betárolás:</div>
<div class="a " style="left:109px;top:660px;width:510px;height:20px;background:#A19E94;border:1px solid #7DA2CE"></div>
<div class="a " style="left:279px;top:660px;width:1px;height:20px;background:#7DA2CE"></div>
<div class="a " style="left:449px;top:660px;width:1px;height:20px;background:#7DA2CE"></div>
<div class="a t" style="left:450px;width:164px;text-align:right;top:665px">1951.38</div>
<div class="a " style="left:619px;top:660px;width:170px;height:20px;background:#A19E94;border:1px solid #6E6C64;border-right-color:#E8E6DE;border-bottom-color:#E8E6DE"></div>
<div class="a t " style="left:622px;top:665px;">KG</div>
<div class="a " style="left:773px;top:662px;width:14px;height:15px;background:#C8C5B8;border:1px solid #4A4840;border-top-color:#F0EEE6;border-left-color:#F0EEE6"><svg class="a" style="left:2px;top:4px" width="9" height="5"><path d="M0.5 0.5 L8.5 0.5 L4.5 4.5 Z" fill="#000"/></svg></div>
<div class="a t " style="left:19px;top:692px;">-2.0.24 ar1145 E</div>
<div class="a " style="left:102px;top:689px;width:1px;height:16px;background:#D0CEC4"></div>
<div class="a t " style="left:108px;top:692px;">1 / 1</div>
<div class="a " style="left:205px;top:689px;width:1px;height:16px;background:#D0CEC4"></div>
<svg class="a" style="left:210px;top:689px" width="15" height="15"><circle cx="7.5" cy="7.5" r="6.3" fill="#FAFAFA" stroke="#1C5180" stroke-width="1.2"/></svg>
<div class="a " style="left:227px;top:689px;width:1px;height:16px;background:#D0CEC4"></div>
<div class="a t " style="left:232px;top:692px;">Az egységár a könyvelési pénznemben</div>
<div class="a " style="left:1038px;top:692px;width:1px;height:13px;background:#C8C6BC"></div>
<div class="a " style="left:1054px;top:694px;width:2px;height:2px;background:#B0AD9F"></div>
<div class="a " style="left:1050px;top:698px;width:2px;height:2px;background:#B0AD9F"></div>
<div class="a " style="left:1054px;top:698px;width:2px;height:2px;background:#B0AD9F"></div>
<div class="a " style="left:1046px;top:702px;width:2px;height:2px;background:#B0AD9F"></div>
<div class="a " style="left:1050px;top:702px;width:2px;height:2px;background:#B0AD9F"></div>
<div class="a " style="left:1054px;top:702px;width:2px;height:2px;background:#B0AD9F"></div>
<div class="a " style="left:1078px;top:86px;width:200px;height:17px;background:#ECE9D8;border-top:1px solid #A8A492;border-bottom:1px solid #A8A492;border-left:1px solid #A8A492"></div>
<div class="a t " style="left:1081px;top:89px;">Könyvjelzők</div>
<svg class="a" style="left:1250px;top:89px" width="10" height="11"><path d="M3.5 1.5 L8.5 1.5 L8.5 6.5 L6.5 6.5" fill="none" stroke="#000" stroke-width="1"/><rect x="3" y="1" width="6" height="2" fill="#000"/><rect x="1.5" y="4.5" width="5" height="5" fill="#fff" stroke="#000" stroke-width="1"/><rect x="1" y="4" width="6" height="2" fill="#000"/></svg>
<svg class="a" style="left:1265px;top:90px" width="10" height="9"><path d="M1 1 L8 8 M8 1 L1 8" stroke="#000" stroke-width="1.6"/></svg>
<div class="a btn" style="left:1079px;top:106px;width:198px;height:28px;"><div style="line-height:26px">Készlet</div></div>
<div class="a btn" style="left:1079px;top:136px;width:198px;height:28px;"><div style="line-height:26px">Megrendelés</div></div>
<div class="a " style="left:1078px;top:165px;width:200px;height:554px;background:#FFFFFF"></div>
<div class="a " style="left:1078px;top:165px;width:200px;height:459px;background:#FFFFFF;border:1px solid #7F9DB9;border-right:none"></div>
<div class="a t " style="left:1081px;top:169px;">Vevői megrendelés</div>
<div class="a t " style="left:1081px;top:184px;">Vevői megrendelés összesítő paramétere</div>
<div class="a " style="left:1079px;top:196px;width:199px;height:15px;background:#ECE9D8"></div>
<div class="a t " style="left:1081px;top:199px;">Cikk</div>
<div class="a " style="left:1079px;top:607px;width:199px;height:16px;background:#FBFBF8"></div>
<div class="a " style="left:1080px;top:607px;width:15px;height:15px;background:linear-gradient(#C8D8FC,#B4C8F8);border:1px solid #fff;border-radius:2px;box-shadow:inset 0 0 0 1px #B8CBF0"><svg class="a" style="left:3px;top:3px" width="8" height="8"><path d="M5.5 0.5 L2 4 L5.5 7.5" fill="none" stroke="#4D6185" stroke-width="2"/></svg></div>
<div class="a " style="left:1096px;top:607px;width:156px;height:15px;background:linear-gradient(90deg,#C4D6FC,#B8CCF8 50%,#C4D6FC);border:1px solid #A8BCE8;border-radius:2px"><svg class="a" style="left:73px;top:3px" width="8" height="8"><path d="M0.5 0 L0.5 8 M2.5 0 L2.5 8 M4.5 0 L4.5 8 M6.5 0 L6.5 8" stroke="#8EA8E0" stroke-width="1"/></svg></div>
<div class="a " style="left:1261px;top:607px;width:15px;height:15px;background:linear-gradient(#C8D8FC,#B4C8F8);border:1px solid #fff;border-radius:2px;box-shadow:inset 0 0 0 1px #B8CBF0"><svg class="a" style="left:3px;top:3px" width="8" height="8"><path d="M2.5 0.5 L6 4 L2.5 7.5" fill="none" stroke="#4D6185" stroke-width="2"/></svg></div>
<div class="a " style="left:1078px;top:622px;width:200px;height:2px;background:#7F9DB9"></div>
<svg class="a" style="left:1078px;top:624px" width="200" height="95" viewBox="1078 624 200 95">
<circle cx="1142" cy="654" r="63" fill="#E4E4E4"/>
<circle cx="1030" cy="770" r="75" fill="#F0F0F0"/>
<g fill="#E8262A">
<circle cx="1143.4" cy="646.8" r="7.2"/><circle cx="1158.4" cy="646.8" r="6.8"/><circle cx="1143.4" cy="661.5" r="7"/>
<path d="M1158.4 654.5 A6.8 6.8 0 0 0 1151.6 661.5 A7 7 0 0 0 1158.4 668.6 L1165.2 668.6 L1165.2 661.5 A6.8 6.8 0 0 0 1158.4 654.5 Z"/>
<path d="M1146 649 L1159 663" stroke="#E8262A" stroke-width="8"/>
<rect x="1147" y="650" width="8" height="8"/>
</g>
<g fill="none" stroke="#6E6E6E" stroke-width="5.4">
<path d="M1168.6 668.6 L1168.6 660 A8 8 0 0 1 1176.6 652"/>
<circle cx="1186.7" cy="659.2" r="7.8"/>
<circle cx="1210" cy="659.2" r="7.8"/>
<path d="M1224.4 640 L1224.4 668.6"/>
<path d="M1232.3 668.6 L1232.3 658 A6 6 0 0 1 1244.3 658 L1244.3 668.6" stroke-width="5"/>
<path d="M1250.3 659.2 L1265.2 659.2 A7.6 7.6 0 1 0 1262.8 664.8" stroke-width="5"/>
<path d="M1271.7 640 L1271.7 668.6 M1266 652.5 L1279 652.5" stroke-width="5"/>
</g>
<text x="1213" y="676.3" font-family="Liberation Sans" font-size="6.8" fill="#555555" textLength="61" lengthAdjust="spacingAndGlyphs">élelmiszeripar online</text>
</svg>
</body></html>
